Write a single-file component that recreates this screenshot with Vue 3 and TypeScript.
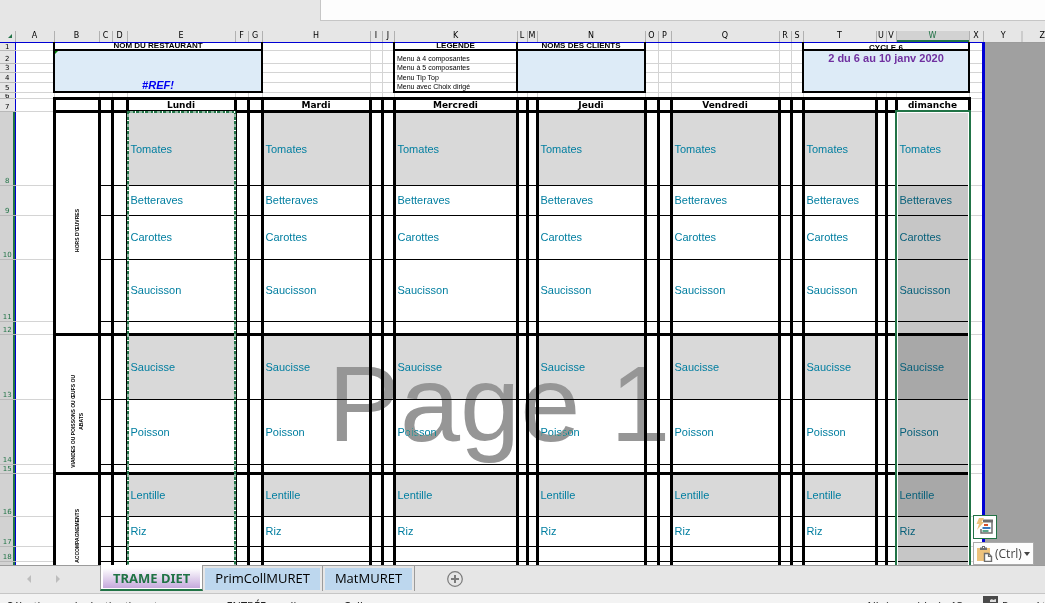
<script setup lang="ts">
interface Column {
  id: string
  width: number
  day?: string
}
interface Row {
  n: number
  height: number
  text?: string
  shade?: boolean
  thick?: boolean
  group?: string[]
  groupClass?: string
  span?: number
}

const columns: Column[] = [
  { id: 'A', width: 39 },
  { id: 'B', width: 45 },
  { id: 'C', width: 13 },
  { id: 'D', width: 15 },
  { id: 'E', width: 108, day: 'Lundi' },
  { id: 'F', width: 13 },
  { id: 'G', width: 14 },
  { id: 'H', width: 108, day: 'Mardi' },
  { id: 'I', width: 12 },
  { id: 'J', width: 12 },
  { id: 'K', width: 123, day: 'Mercredi' },
  { id: 'L', width: 10 },
  { id: 'M', width: 10 },
  { id: 'N', width: 108, day: 'Jeudi' },
  { id: 'O', width: 13 },
  { id: 'P', width: 13 },
  { id: 'Q', width: 108, day: 'Vendredi' },
  { id: 'R', width: 12 },
  { id: 'S', width: 12 },
  { id: 'T', width: 73, day: ' ' },
  { id: 'U', width: 10 },
  { id: 'V', width: 10 },
  { id: 'W', width: 73, day: 'dimanche' },
  { id: 'X', width: 14 },
  { id: 'Y', width: 40 },
]
const planColumns = columns.slice(2, 23)
const dayRowColumns = columns.slice(1, 23)

const legend = ['Menu à 4 composantes', 'Menu à 5 composantes', 'Menu Tip Top', 'Menu avec Choix dirigé']
const topRows = [
  { n: 2, height: 13 },
  { n: 3, height: 9 },
  { n: 4, height: 10 },
  { n: 5, height: 10 },
]

const rows: Row[] = [
  { n: 8, height: 74, text: 'Tomates', shade: true, group: ["HORS D'ŒUVRES"], groupClass: 'low', span: 5 },
  { n: 9, height: 30, text: 'Betteraves' },
  { n: 10, height: 44, text: 'Carottes' },
  { n: 11, height: 62, text: 'Saucisson' },
  { n: 12, height: 13, thick: true },
  { n: 13, height: 65, text: 'Saucisse', shade: true, group: ['VIANDES OU POISSONS OU ŒUFS OU', 'ABATS'], groupClass: 'lower', span: 3 },
  { n: 14, height: 65, text: 'Poisson' },
  { n: 15, height: 9, thick: true },
  { n: 16, height: 43, text: 'Lentille', shade: true, group: ['ACCOMPAGNEMENTS'], span: 4 },
  { n: 17, height: 30, text: 'Riz' },
  { n: 18, height: 15 },
  { n: 19, height: 38 },
]
</script>

<template>
  <div class="app">
    <div class="formula">
      <input class="formula-box" type="text" aria-label="Barre de formule" />
    </div>

    <main class="sheet">
      <table class="grid">
        <colgroup>
          <col class="num-col" />
          <col v-for="c in columns" :key="c.id" :style="{ width: c.width + 'px' }" />
          <col />
        </colgroup>
        <thead>
          <tr class="letters">
            <th class="corner"><svg viewBox="0 0 4 4" width="4" height="4"><path d="M4 0V4H0Z" fill="#217346" /></svg></th>
            <th v-for="c in columns" :key="c.id" scope="col" :class="{ current: c.id === 'W', beyond: c.id === 'Y' }">{{ c.id }}</th>
            <th scope="col" class="last">Z</th>
          </tr>
        </thead>
        <tbody>
          <tr class="r1">
            <th scope="row" class="num">1</th>
            <td class="lite"></td>
            <td colspan="6" class="boxed"><div class="title">NOM DU RESTAURANT</div></td>
            <td v-for="i in 3" :key="'a' + i" class="lite"></td>
            <td class="boxed"><div class="title">LEGENDE</div></td>
            <td colspan="3" class="boxed"><div class="title">NOMS DES CLIENTS</div></td>
            <td v-for="i in 5" :key="'b' + i" class="lite"></td>
            <td colspan="4" class="boxed"><div class="title cycle">CYCLE 6</div></td>
            <td class="lite edge"></td>
          </tr>
          <tr v-for="(r, i) in topRows" :key="r.n" :style="{ height: r.height + 'px' }">
            <th scope="row" class="num">{{ r.n }}</th>
            <td class="lite"></td>
            <td v-if="i === 0" colspan="6" rowspan="4" class="boxed blue ref">#REF!</td>
            <td v-for="k in 3" :key="'a' + k" class="lite"></td>
            <td class="legend" :class="{ 'legend-end': i === 3 }">{{ legend[i] }}</td>
            <td v-if="i === 0" colspan="3" rowspan="4" class="boxed blue"></td>
            <td v-for="k in 5" :key="'b' + k" class="lite"></td>
            <td v-if="i === 0" colspan="4" rowspan="4" class="boxed blue week">2 du 6 au 10 janv 2020</td>
            <td class="lite edge"></td>
          </tr>
          <tr class="r6">
            <th scope="row" class="num"><div>6</div></th>
            <td v-for="c in columns.slice(0, 24)" :key="c.id" class="lite" :class="{ edge: c.id === 'X' }"></td>
          </tr>
          <tr class="r7">
            <th scope="row" class="num">7</th>
            <td class="lite"></td>
            <th v-for="c in dayRowColumns" :key="c.id" class="day" scope="col">{{ c.day }}</th>
            <td class="lite edge"></td>
          </tr>
          <tr v-for="r in rows" :key="r.n" :style="{ height: r.height + 'px' }">
            <th scope="row" class="num picked">{{ r.n }}</th>
            <td class="lite"></td>
            <th v-if="r.group" :rowspan="r.span" scope="rowgroup" class="group" :class="r.groupClass">
              <div class="turned"><span v-for="g in r.group" :key="g">{{ g }}</span></div>
            </th>
            <td
              v-for="c in planColumns"
              :key="c.id"
              class="cell"
              :class="{ thick: r.thick, shade: c.day && r.shade, sel: c.id === 'W', active: c.id === 'W' && r.n === 8 }"
            >{{ c.day ? r.text : '' }}</td>
            <td class="lite edge"></td>
          </tr>
        </tbody>
      </table>

      <div class="watermark" aria-hidden="true">Page 1</div>
      <div class="flag"></div>
      <div class="copied"></div>
      <div class="selection"></div>

      <button class="quick" type="button" aria-label="Analyse rapide">
        <svg viewBox="0 0 18 18" width="18" height="18">
          <path d="M7 3h9v12H5v-4" fill="#fff" stroke="#6d6d6d" stroke-width="1.5" />
          <path d="M7 1.500h10v3H7z" fill="#6d6d6d" />
          <path d="M8 6h4v2H8z" fill="#d9532c" />
          <path d="M6.500 9h8v2h-8z" fill="#3a7abf" />
          <path d="M6.500 12h6v2h-6z" fill="#57a58a" />
          <path d="M3 0h5L5.500 4H8L1 12l2-6H.5z" fill="#edc27c" />
        </svg>
      </button>
      <button class="paste" type="button">
        <svg viewBox="0 0 16 17" width="16" height="17">
          <path d="M0 3h13v13H0z" fill="#edc27c" />
          <path d="M3 5V2.500h2V1h3v1.500h2V5z" fill="#6d6d6d" />
          <path d="M6 2h1v1H6z" fill="#fff" />
          <path d="M7.500 8.500h4l3 3v5h-7z" fill="#fff" stroke="#6d6d6d" stroke-width="1.4" />
          <path d="M11.500 8.500v3h3" fill="none" stroke="#6d6d6d" stroke-width="1.2" />
        </svg>
        <span>(Ctrl)</span>
        <svg viewBox="0 0 6 4" width="6" height="4"><path d="M0 0h6L3 4z" fill="#444" /></svg>
      </button>
    </main>

    <nav class="tabs" aria-label="Feuilles">
      <div class="arrows">
        <button type="button" aria-label="Feuille précédente"><svg viewBox="0 0 4 8" width="4" height="8"><path d="M4 0v8L0 4z" fill="#bdbdbd" /></svg></button>
        <button type="button" aria-label="Feuille suivante"><svg viewBox="0 0 4 8" width="4" height="8"><path d="M0 0v8l4-4z" fill="#bdbdbd" /></svg></button>
      </div>
      <button class="tab on" type="button"><span>TRAME DIET</span></button>
      <button class="tab" type="button"><span>PrimCollMURET</span></button>
      <button class="tab" type="button"><span>MatMURET</span></button>
      <button class="add" type="button" aria-label="Nouvelle feuille">
        <svg viewBox="0 0 16 16" width="16" height="16">
          <circle cx="8" cy="8" r="7.300" fill="none" stroke="#7b7b7b" stroke-width="1.2" />
          <path d="M8 4v8M4 8h8" stroke="#7b7b7b" stroke-width="2" />
        </svg>
      </button>
    </nav>

    <footer class="status">
      <span>Sélectionnez la destination et appuyez sur ENTRÉE ou cliquez sur Coller</span>
      <span class="count">Nb (non vides) : 13</span>
      <svg viewBox="0 0 15 12" width="15" height="12">
        <path d="M0 0h15v12H0z" fill="#4a4a4a" />
        <path d="M7 4l2-1 1 1 3-1v3H7z" fill="#e0e0e0" />
      </svg>
      <span class="display">Paramètres d'affichage</span>
    </footer>
  </div>
</template>

<style>
body {
  margin: 0;
  overflow: hidden;
}
</style>

<style scoped>
.app {
  display: flex;
  flex-direction: column;
  height: 100vh;
  overflow: hidden;
  background: #e6e6e6;
  font-family: 'Liberation Sans', Arial, sans-serif;
  color: #000;
}
.app * {
  box-sizing: border-box;
}
button {
  padding: 0;
  border: 0;
  background: none;
  font: inherit;
  color: inherit;
}
.formula {
  flex: none;
  height: 31px;
  padding-left: 320px;
}
.formula-box {
  display: block;
  width: 100%;
  height: 21px;
  border: solid #c6c6c6;
  border-width: 0 0 1px 1px;
  background: #fdfdfd;
  outline: 0;
}
.sheet {
  position: relative;
  flex: 1;
  min-height: 0;
  overflow: hidden;
  background: #a0a0a0;
}
.grid {
  width: 100%;
  table-layout: fixed;
  border-collapse: collapse;
  font-size: 8px;
  line-height: 8px;
}
.grid th,
.grid td {
  padding: 0;
  overflow: hidden;
  white-space: nowrap;
}
.num-col {
  width: 15px;
}
.letters {
  height: 11px;
}
.letters th {
  background: #e6e6e6;
  border-right: 1px solid #b1b1b1;
  border-bottom: 1px solid #0000d4;
  font: 8px/10px 'DejaVu Sans', sans-serif;
  text-align: center;
}
.letters th.current {
  background: linear-gradient(#d2d2d2 9px, #217346 9px);
  color: #217346;
}
.letters th.beyond {
  border-right: 0;
  border-bottom-color: #9b9b9b;
  background: linear-gradient(to left, #b1b1b1 1px, #e6e6e6 1px);
}
.letters th.last {
  text-align: right;
  border-right: 0;
  border-bottom-color: #9b9b9b;
}
.corner svg {
  display: block;
  margin-left: 8px;
}
.num {
  background: #e6e6e6;
  border-right: 1px solid #0000d4;
  border-bottom: 1px solid #b8b8b8;
  vertical-align: bottom;
  text-align: center;
  font: 7px/8px 'DejaVu Sans', sans-serif;
}
.r1 .num {
  line-height: 6px;
}
.num.picked {
  background: linear-gradient(to left, #217346 2px, #d2d2d2 2px);
  color: #217346;
}
.lite {
  background: #fff;
  border: solid #d4d4d4;
  border-width: 0 1px 1px 0;
}
.lite.edge {
  border-right: 3px solid #0000d4;
}
.r1 {
  height: 8px;
}
.boxed {
  background: #fff;
  border: 2px solid #000;
  border-top-width: 0;
}
.title {
  height: 6px;
  overflow: hidden;
  font-weight: 700;
  font-size: 8px;
  line-height: 6px;
  text-align: center;
}
.title.cycle {
  line-height: 9px;
}
.blue {
  background: #ddebf7;
}
.ref {
  vertical-align: bottom;
  text-align: center;
  color: #0000f0;
  font: italic 700 11px/11px 'Liberation Sans', Arial, sans-serif;
}
.week {
  vertical-align: top;
  text-align: center;
  color: #7030a0;
  font-weight: 700;
  font-size: 11px;
  line-height: 15px;
}
.grid .legend {
  padding-left: 2px;
  background: #fff;
  border: 2px solid #000;
  border-top: 0;
  border-bottom: 1px solid #d4d4d4;
  vertical-align: bottom;
  font-size: 7px;
  line-height: 8px;
}
.grid .legend-end {
  border-bottom: 2px solid #000;
}
.r6 {
  height: 6px;
}
.r6 .num div {
  height: 4px;
  overflow: hidden;
  line-height: 4px;
}
.r7 {
  height: 13px;
}
.day {
  background: #fff;
  border: 3px solid #000;
  font: 700 9px/10px 'DejaVu Sans', sans-serif;
}
.group {
  background: #fff;
  border: 3px solid #000;
  vertical-align: middle;
}
.grid .low {
  padding-top: 16px;
}
.grid .lower {
  padding-top: 36px;
}
.turned {
  display: flex;
  flex-direction: column;
  align-items: center;
  margin: 0 auto;
  width: max-content;
  writing-mode: vertical-rl;
  transform: rotate(180deg);
  font-weight: 700;
  font-size: 5px;
  line-height: 8px;
}
.cell {
  background: #fff;
  border: solid #000;
  border-width: 1px 3px;
  color: #007ea0;
  font-size: 11px;
  line-height: 12px;
  text-align: left;
  vertical-align: middle;
}
.grid .cell {
  padding-left: 2px;
}
.cell.thick {
  border-bottom-width: 3px;
  line-height: 4px;
}
.cell.shade {
  background: #d9d9d9;
}
.cell.sel {
  background: #c6c6c6;
  color: #08607a;
}
.cell.sel.shade {
  background: #a8a8a8;
}
.cell.sel.active {
  background: #d9d9d9;
  color: #007ea0;
}
.watermark {
  position: absolute;
  left: 328px;
  top: 311px;
  color: #969696;
  font-size: 108px;
  line-height: 124px;
  white-space: nowrap;
  mix-blend-mode: darken;
  pointer-events: none;
}
.flag {
  position: absolute;
  left: 55px;
  top: 20px;
  border-top: 3px solid #008000;
  border-right: 3px solid transparent;
}
.copied {
  position: absolute;
  left: 127px;
  top: 80px;
  bottom: 0;
  width: 109px;
  --down: repeating-linear-gradient(#217346 0 3px, #8fb9a2 3px 6px, #217346 6px 9px, #fff 9px 10px);
  --across: repeating-linear-gradient(to right, #217346 0 3px, #8fb9a2 3px 6px, #217346 6px 8px, #fff 8px 9px);
  background:
    var(--across) 0 0 / 100% 2px no-repeat,
    var(--down) 0 0 / 2px 100% no-repeat,
    var(--down) 100% 0 / 2px 100% no-repeat;
  pointer-events: none;
}
.selection {
  position: absolute;
  left: 895px;
  top: 79px;
  bottom: -10px;
  width: 76px;
  border: 2px solid #217346;
  box-shadow: inset 0 0 0 1px #fff;
  pointer-events: none;
}
.quick {
  position: absolute;
  left: 973px;
  bottom: 26px;
  display: flex;
  align-items: center;
  justify-content: center;
  width: 24px;
  height: 24px;
  border: 1px solid #217346;
  background: #fff;
}
.paste {
  position: absolute;
  left: 973px;
  bottom: 0;
  display: flex;
  align-items: center;
  gap: 2px;
  height: 23px;
  padding: 0 3px;
  border: 1px solid #ababab;
  background: #fdfdfd;
  color: #444;
  font: 12px/20px 'Open Sans', 'Noto Sans', sans-serif;
}
.tabs {
  flex: none;
  display: flex;
  align-items: flex-start;
  height: 29px;
  border-top: 1px solid #9b9b9b;
  border-bottom: 1px solid #c6c6c6;
  background: #e6e6e6;
}
.arrows {
  display: flex;
  gap: 25px;
  width: 100px;
  padding: 9px 0 0 27px;
}
.arrows button,
.arrows svg {
  display: block;
}
.tab {
  display: flex;
  height: 25px;
  padding: 2px 2px 0 2px;
  border-right: 1px solid #9b9b9b;
  font: 13px/20px 'Open Sans', 'Noto Sans', sans-serif;
}
.tab span {
  padding: 0 10px;
  height: 22px;
  background: #bdd7ee;
}
.tab.on {
  margin-top: -1px;
  height: 26px;
  padding: 3px 2px 1px;
  border: solid #9b9b9b;
  border-width: 0 1px 2px;
  border-bottom-color: #217346;
  background: #fff;
  color: #217346;
  font-family: 'Noto Sans', 'Open Sans', sans-serif;
  font-weight: 700;
}
.tab.on span {
  height: 20px;
  background: linear-gradient(#fff, #c5a9dc);
}
.add {
  margin: 5px 0 0 32px;
}
.add svg {
  display: block;
}
.status {
  flex: none;
  display: flex;
  align-items: flex-start;
  height: 9px;
  padding: 4px 0 0 7px;
  overflow: hidden;
  background: #f3f3f3;
  color: #222;
  font: 11px/15px 'Noto Sans', 'Open Sans', sans-serif;
  white-space: nowrap;
}
.status svg {
  flex: none;
  margin: -2px 4px 0 20px;
}
.count {
  margin-left: auto;
}
.display {
  width: 43px;
  overflow: hidden;
}
</style>
